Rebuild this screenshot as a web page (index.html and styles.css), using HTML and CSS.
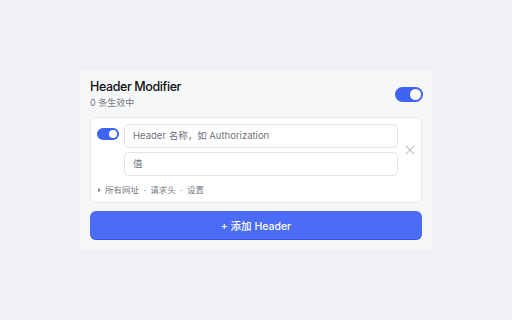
FILE: index.html
```html
<!DOCTYPE html>
<html lang="zh">
<head>
<meta charset="utf-8">
<link rel="stylesheet" href="styles.css">
</head>
<body>
<div class="panel">
  <div class="head">
    <div class="titles">
      <div class="title">Header Modifier</div>
      <div class="sub">0 条生效中</div>
    </div>
    <span class="toggle big"><span class="knob"></span></span>
  </div>
  <div class="card">
    <div class="row">
      <span class="toggle small"><span class="knob"></span></span>
      <div class="fields">
        <div class="input">Header 名称，如 Authorization</div>
        <div class="input">值</div>
      </div>
      <svg class="close" width="10" height="10" viewBox="0 0 10 10"><path d="M1 1L9 9M9 1L1 9" stroke="#c4c8cf" stroke-width="1.2" fill="none"/></svg>
    </div>
    <div class="foot"><span class="tri"></span>所有网址 <span class="dot">·</span> 请求头 <span class="dot">·</span> 设置</div>
  </div>
  <button class="add">+ 添加 Header</button>
</div>
</body>
</html>
```
FILE: styles.css
```css
* { box-sizing: border-box; }
html, body { margin: 0; }
body {
  background: #eff1f5;
  font-family: "Inter", "Noto Sans CJK SC", sans-serif;
  width: 512px;
  height: 320px;
  padding: 70px 80px;
}
.panel {
  width: 352px;
  height: 180px;
  background: #f6f7f9;
  padding: 9px 10px 10px;
  display: flex;
  flex-direction: column;
}
.head {
  display: flex;
  align-items: center;
  justify-content: space-between;
  margin-bottom: 7px;
}
.title {
  font-size: 12.5px;
  font-weight: 500;
  letter-spacing: -0.4px;
  color: #111;
  line-height: 16px;
}
.sub {
  font-size: 9px;
  color: #777b82;
  line-height: 14px;
  margin-top: 1px;
}
.toggle {
  display: inline-flex;
  align-items: center;
  justify-content: flex-end;
  background: #3f63f3;
  border-radius: 999px;
  flex: none;
}
.toggle.big { width: 28px; height: 15px; padding: 2px; margin-right: -1px; }
.toggle.big .knob { width: 11px; height: 11px; }
.toggle.small { width: 22px; height: 12px; padding: 2px; margin-top: 4px; margin-right: 5px; }
.toggle.small .knob { width: 8px; height: 8px; }
.knob { background: #fff; border-radius: 50%; display: block; }
.card {
  background: #fff;
  border: 1px solid #e4e6ea;
  border-radius: 6px;
  padding: 6px;
  height: 86px;
}
.row {
  display: flex;
  align-items: flex-start;
}
.fields {
  display: flex;
  flex-direction: column;
  gap: 4px;
  flex: 1;
  min-width: 0;
}
.input {
  height: 24px;
  border: 1px solid #dfe2e7;
  border-radius: 5px;
  padding: 0 8px;
  font-size: 9.5px;
  line-height: 21px;
  color: #6f737a;
  background: #fff;
}
.close { margin: 21px 0 0 7px; flex: none; }
.foot {
  margin-top: 8px;
  font-size: 8.5px;
  color: #777b82;
  line-height: 12px;
  display: flex;
  align-items: center;
  padding-left: 1px;
  white-space: pre;
}
.dot { margin: 0 2px; }
.tri {
  width: 0; height: 0;
  border-left: 3px solid #80848b;
  border-top: 2.5px solid transparent;
  border-bottom: 2.5px solid transparent;
  margin-right: 4px;
}
.add {
  margin-top: 8px;
  height: 29px;
  width: 100%;
  background: #4a6cf7;
  border: none;
  border-bottom: 1px solid #2f55f0;
  border-radius: 6px;
  color: #fff;
  font-family: inherit;
  font-size: 10.5px;
  font-weight: 500;
  padding: 0;
}
```
